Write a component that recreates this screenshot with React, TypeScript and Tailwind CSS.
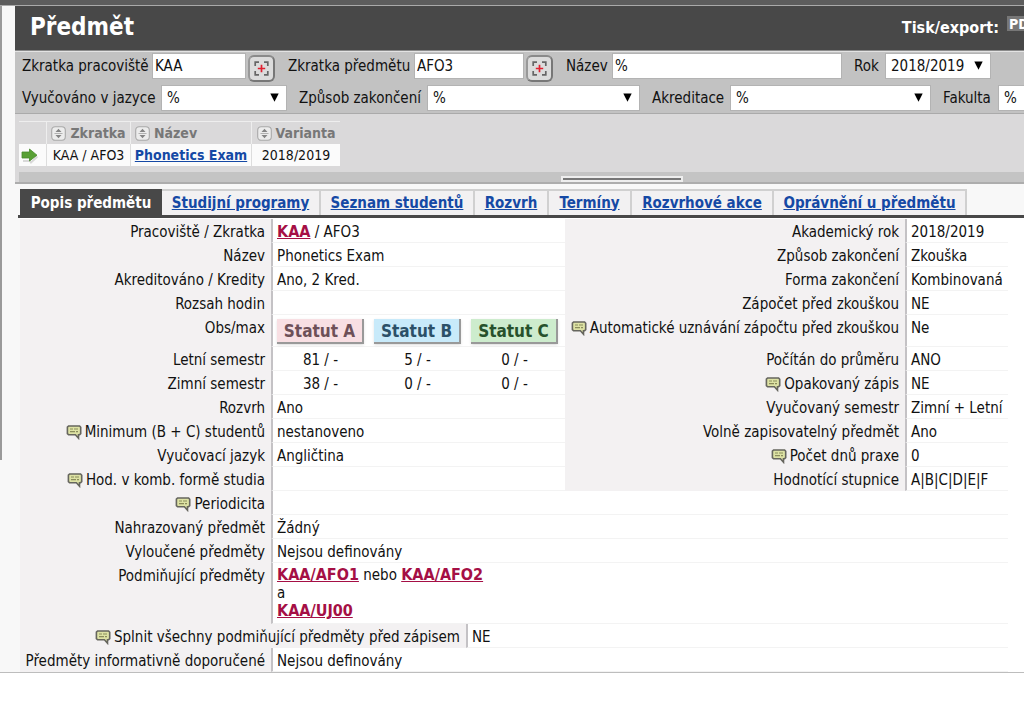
import type { ReactNode } from 'react';

function HelpIcon() {
  return (
    <svg className="mr-[3px] inline-block size-4 shrink-0 align-[-3px]" viewBox="0 0 16 16" aria-hidden="true">
      <path d="M2.6 2h11l1.1 1.2v6.4l-1.1 1.2h-1.1v3.4L9.4 10.8H2.6L1.4 9.6V3.2z" fill="#dde2a4" stroke="#66665e" strokeWidth="1.6" />
      <path d="M4 5h3M8 5h4M4 7.6h5M10 7.6h2" stroke="#8a8d5c" strokeWidth="1.1" />
    </svg>
  );
}

function SortIcon() {
  return (
    <svg className="mr-1 inline-block size-[15px] shrink-0 align-[-3px]" viewBox="0 0 15 15" aria-hidden="true">
      <rect x="0.7" y="0.7" width="13.6" height="13.6" rx="3.5" fill="#ececec" stroke="#a9a9a9" strokeWidth="1.1" />
      <path d="M7.5 2.8l3 3.2h-6zM7.5 12.2l3-3.2h-6z" fill="#858585" />
      <path d="M3.5 7.5h8" stroke="#aaa" strokeWidth="0.9" />
    </svg>
  );
}

function PickButton({ label }: { label: string }) {
  return (
    <button
      type="button"
      aria-label={label}
      className="mt-1 ml-[2px] flex size-[27px] shrink-0 items-center justify-center rounded-[6px] border-2 border-t-[#8a8a8a] border-r-[#777] border-b-[#777] border-l-[#999] bg-[#dcdcdc]"
    >
      <svg className="size-[15px]" viewBox="0 0 15 15" aria-hidden="true">
        <path d="M1.2 5V1.2H5M10 1.2h3.8V5M13.8 10v3.8H10M5 13.8H1.2V10" fill="none" stroke="#666" strokeWidth="1.7" />
        <path d="M7.5 3.8v7.4M3.8 7.5h7.4" stroke="#e02030" strokeWidth="1.7" />
      </svg>
    </button>
  );
}

type FieldProps = { id: string; label: string; value: string; labelWidth: string; width: string };

function TextField({ id, label, value, labelWidth, width }: FieldProps) {
  return (
    <>
      <label htmlFor={id} className={`shrink-0 whitespace-nowrap ${labelWidth}`}>{label}</label>
      <input id={id} type="text" defaultValue={value} className={`h-[26px] shrink-0 border border-[#b3b3b3] bg-white px-[2px] ${width}`} />
    </>
  );
}

function SelectField({ id, label, value, labelWidth, width }: FieldProps) {
  return (
    <>
      <label htmlFor={id} className={`shrink-0 whitespace-nowrap ${labelWidth}`}>{label}</label>
      <span className={`relative shrink-0 ${width}`}>
        <select id={id} defaultValue={value} className="block h-[26px] w-full appearance-none border border-[#b3b3b3] bg-white pl-[5px]">
          <option>{value}</option>
        </select>
        <svg className="pointer-events-none absolute top-2 right-2 h-[9px] w-[9px]" viewBox="0 0 9 9" aria-hidden="true">
          <path d="M0.3 0.5h8.4L4.5 8.7z" fill="#000" />
        </svg>
      </span>
    </>
  );
}

type Item = { label: string; value?: ReactNode; help?: boolean; height?: string };

function DetailTable({ items, labelWidth, className }: { items: Item[]; labelWidth: string; className: string }) {
  return (
    <table className={`table-fixed border-separate border-spacing-0 leading-5 ${className}`}>
      <tbody>
        {items.map((item) => (
          <tr key={item.label} className={item.height ?? 'h-6'}>
            <th scope="row" className={`bg-[#f3f1f2] pt-[3px] pr-[6px] text-right align-top font-normal whitespace-nowrap ${labelWidth}`}>
              {item.help && <HelpIcon />}
              {item.label}
            </th>
            <td className="border-b border-l-2 border-b-[#f3f3f3] border-l-[#c4c2c5] bg-white pt-[3px] pl-1 align-top whitespace-nowrap">
              {item.value}
            </td>
          </tr>
        ))}
      </tbody>
    </table>
  );
}

function CourseLink({ children }: { children: ReactNode }) {
  return <a href="#predmet" className="text-[16px] font-bold text-[#a50f45] underline">{children}</a>;
}

function Badge({ children, tone }: { children: ReactNode; tone: string }) {
  return (
    <span className={`flex h-[25px] w-[87px] items-center justify-center border-r-2 border-b-2 border-[#999] text-[17px] font-bold shadow-sm ${tone}`}>
      {children}
    </span>
  );
}

function Counts({ values }: { values: string[] }) {
  return (
    <div className="flex gap-[10px]">
      {values.map((v, i) => (
        <span key={i} className="w-[87px] text-center">{v}</span>
      ))}
    </div>
  );
}

const left: Item[] = [
  { label: 'Pracoviště / Zkratka', value: <><CourseLink>KAA</CourseLink> / AFO3</> },
  { label: 'Název', value: 'Phonetics Exam' },
  { label: 'Akreditováno / Kredity', value: 'Ano, 2 Kred.' },
  { label: 'Rozsah hodin' },
  {
    label: 'Obs/max',
    height: 'h-8',
    value: (
      <div className="flex gap-[10px] pt-px">
        <Badge tone="bg-[#f8dfe3] text-[#6d5058]">Statut A</Badge>
        <Badge tone="bg-[#c8eafa] text-[#2b5068]">Statut B</Badge>
        <Badge tone="bg-[#cdeccd] text-[#27512c]">Statut C</Badge>
      </div>
    ),
  },
  { label: 'Letní semestr', value: <Counts values={['81 / -', '5 / -', '0 / -']} /> },
  { label: 'Zimní semestr', value: <Counts values={['38 / -', '0 / -', '0 / -']} /> },
  { label: 'Rozvrh', value: 'Ano' },
  { label: 'Minimum (B + C) studentů', value: 'nestanoveno', help: true },
  { label: 'Vyučovací jazyk', value: 'Angličtina' },
  { label: 'Hod. v komb. formě studia', help: true },
];

const right: Item[] = [
  { label: 'Akademický rok', value: '2018/2019' },
  { label: 'Způsob zakončení', value: 'Zkouška' },
  { label: 'Forma zakončení', value: 'Kombinovaná' },
  { label: 'Zápočet před zkouškou', value: 'NE' },
  { label: 'Automatické uznávání zápočtu před zkouškou', value: 'Ne', help: true, height: 'h-8' },
  { label: 'Počítán do průměru', value: 'ANO' },
  { label: 'Opakovaný zápis', value: 'NE', help: true },
  { label: 'Vyučovaný semestr', value: 'Zimní + Letní' },
  { label: 'Volně zapisovatelný předmět', value: 'Ano' },
  { label: 'Počet dnů praxe', value: '0', help: true },
  { label: 'Hodnotící stupnice', value: 'A|B|C|D|E|F' },
];

const lower: Item[] = [
  { label: 'Periodicita', help: true },
  { label: 'Nahrazovaný předmět', value: 'Žádný' },
  { label: 'Vyloučené předměty', value: 'Nejsou definovány' },
  {
    label: 'Podmiňující předměty',
    height: 'h-[61px]',
    value: (
      <div className="leading-[18px]">
        <CourseLink>KAA/AFO1</CourseLink> nebo <CourseLink>KAA/AFO2</CourseLink>
        <br />a<br />
        <CourseLink>KAA/UJ00</CourseLink>
      </div>
    ),
  },
];

const tabs = [
  { label: 'Studijní programy', width: 'w-[159px]' },
  { label: 'Seznam studentů', width: 'w-[154px]' },
  { label: 'Rozvrh', width: 'w-[74px]' },
  { label: 'Termíny', width: 'w-[83px]' },
  { label: 'Rozvrhové akce', width: 'w-[142px]' },
  { label: 'Oprávnění u předmětu', width: 'w-[193px]' },
];

export default function App() {
  return (
    <div className="min-h-screen overflow-hidden bg-white font-['DejaVu_Sans_Condensed','DejaVu_Sans','Noto_Sans',sans-serif] text-[15px] leading-[21px] text-[#111]">
      <div className="h-[6px] border-b border-[#aaa] bg-[#5d5d5d]" />
      <div className="flex border-b border-[#bdbdbd] bg-[#f8f8f8]">
        <div className="h-[454px] w-[15px] shrink-0 border-l-2 border-[#9a9a9a]" />
        <main className="min-w-0 flex-1">
          <header className="flex h-[45px] items-center justify-between overflow-hidden border-b border-[#8b8b8b] bg-[#484848] pl-[15px] text-white">
            <h1 className="pb-[2px] text-[24px] font-bold">Předmět</h1>
            <div className="flex items-center gap-2">
              <span className="pb-[2px] text-[16px] font-bold">Tisk/export:</span>
              <a href="#pdf" aria-label="Export do PDF" className="flex h-6 w-[17px] items-start overflow-hidden">
                <span className="h-[15px] shrink-0 bg-[#777] pt-px pl-[2px] text-[14px] leading-[14px] font-bold">PDF</span>
              </a>
            </div>
          </header>

          <form className="h-[63px] overflow-hidden border-t border-b border-t-[#e3e3e3] border-b-[#aaa] bg-[#c2c2c2] pl-[7px]">
            <div className="mb-[3px] flex h-7 items-center">
              <TextField id="pracoviste" label="Zkratka pracoviště" value="KAA" labelWidth="w-[130px]" width="w-[94px]" />
              <PickButton label="Vybrat pracoviště" />
              <span className="w-[13px] shrink-0" />
              <TextField id="predmet-kod" label="Zkratka předmětu" value="AFO3" labelWidth="w-[126px]" width="w-[110px]" />
              <PickButton label="Vybrat předmět" />
              <span className="w-[13px] shrink-0" />
              <TextField id="nazev" label="Název" value="%" labelWidth="w-[46px]" width="w-[230px]" />
              <span className="w-3 shrink-0" />
              <SelectField id="rok" label="Rok" value="2018/2019" labelWidth="w-[31px]" width="w-[106px]" />
            </div>
            <div className="flex h-[30px] items-center">
              <SelectField id="jazyk" label="Vyučováno v jazyce" value="%" labelWidth="w-[139px]" width="w-[126px]" />
              <span className="w-3 shrink-0" />
              <SelectField id="zakonceni" label="Způsob zakončení" value="%" labelWidth="w-[128px]" width="w-[213px]" />
              <span className="w-3 shrink-0" />
              <SelectField id="akreditace" label="Akreditace" value="%" labelWidth="w-[78px]" width="w-[201px]" />
              <span className="w-3 shrink-0" />
              <SelectField id="fakulta" label="Fakulta" value="%" labelWidth="w-[55px]" width="w-[126px]" />
            </div>
          </form>

          <section className="border-b-2 border-[#adadad] bg-[#dad9da]">
            <div className="h-[58px] pt-[7px] pl-1">
              <table className="border-separate border-spacing-0">
                <thead>
                  <tr className="h-[23px] text-[14px] text-[#777]">
                    <td className="w-7 border-t border-r border-[#eee] p-0" />
                    <th className="w-[84px] border-t border-r border-[#eee] p-0 whitespace-nowrap"><SortIcon />Zkratka</th>
                    <th className="w-[121px] border-t border-r border-[#eee] p-0 pl-1 text-left whitespace-nowrap"><SortIcon />Název</th>
                    <th className="w-[88px] border-t border-[#eee] p-0 whitespace-nowrap"><SortIcon />Varianta</th>
                  </tr>
                </thead>
                <tbody>
                  <tr className="h-[22px] bg-[#fbfbfb] text-center text-[14px]">
                    <td className="border-r border-[#ddd] p-0">
                      <svg className="ml-[2px] h-[17px] w-[18px]" viewBox="0 0 18 17" aria-hidden="true">
                        <path d="M2 14h7l1 1.5 6.5-6" stroke="#d8d8d8" strokeWidth="1.8" fill="none" />
                        <path d="M1 5h7.5V2L16 8.2 8.5 14v-3H1z" fill="#58a034" stroke="#478a2b" strokeWidth="0.8" />
                      </svg>
                    </td>
                    <td className="border-r border-[#ddd] p-0 whitespace-nowrap">KAA / AFO3</td>
                    <td className="border-r border-[#ddd] p-0 whitespace-nowrap"><a href="#phonetics" className="font-bold text-[#1549a5] underline">Phonetics Exam</a></td>
                    <td className="p-0 whitespace-nowrap">2018/2019</td>
                  </tr>
                </tbody>
              </table>
            </div>
            <div className="ml-1 flex h-[10px] items-center justify-center bg-[#c4c4c4] pt-[3px] pl-[200px]">
              <div className="h-[6px] w-[122px] border-2 border-[#eee] bg-[#777]" />
            </div>
          </section>

          <nav className="mt-[5px] ml-[3px] flex h-[29px] items-stretch border-b-[3px] border-[#484848] pl-[2px] text-[15px] font-bold">
            <a href="#popis" aria-current="page" className="flex w-[142px] shrink-0 items-center justify-center bg-[#484848] pt-[2px] whitespace-nowrap text-white">Popis předmětu</a>
            {tabs.map((tab) => (
              <a key={tab.label} href="#zalozka" className={`flex shrink-0 items-center justify-center border-t-2 border-r-2 border-[#d0d0d0] bg-[#f2f1f2] whitespace-nowrap text-[#1549a5] underline ${tab.width}`}>
                {tab.label}
              </a>
            ))}
          </nav>

          <div className="ml-[5px] bg-white pt-px">
            <div className="flex pr-4">
              <DetailTable items={left} labelWidth="w-[251px]" className="min-w-0 flex-1" />
              <DetailTable items={right} labelWidth="w-[340px]" className="w-[443px]" />
            </div>
            <div className="pr-4">
              <DetailTable items={lower} labelWidth="w-[251px]" className="w-full" />
              <DetailTable items={[{ label: 'Splnit všechny podmiňující předměty před zápisem', value: 'NE', help: true }]} labelWidth="w-[446px]" className="w-full" />
              <DetailTable items={[{ label: 'Předměty informativně doporučené', value: 'Nejsou definovány' }]} labelWidth="w-[251px]" className="w-full" />
            </div>
          </div>
        </main>
      </div>
    </div>
  );
}
